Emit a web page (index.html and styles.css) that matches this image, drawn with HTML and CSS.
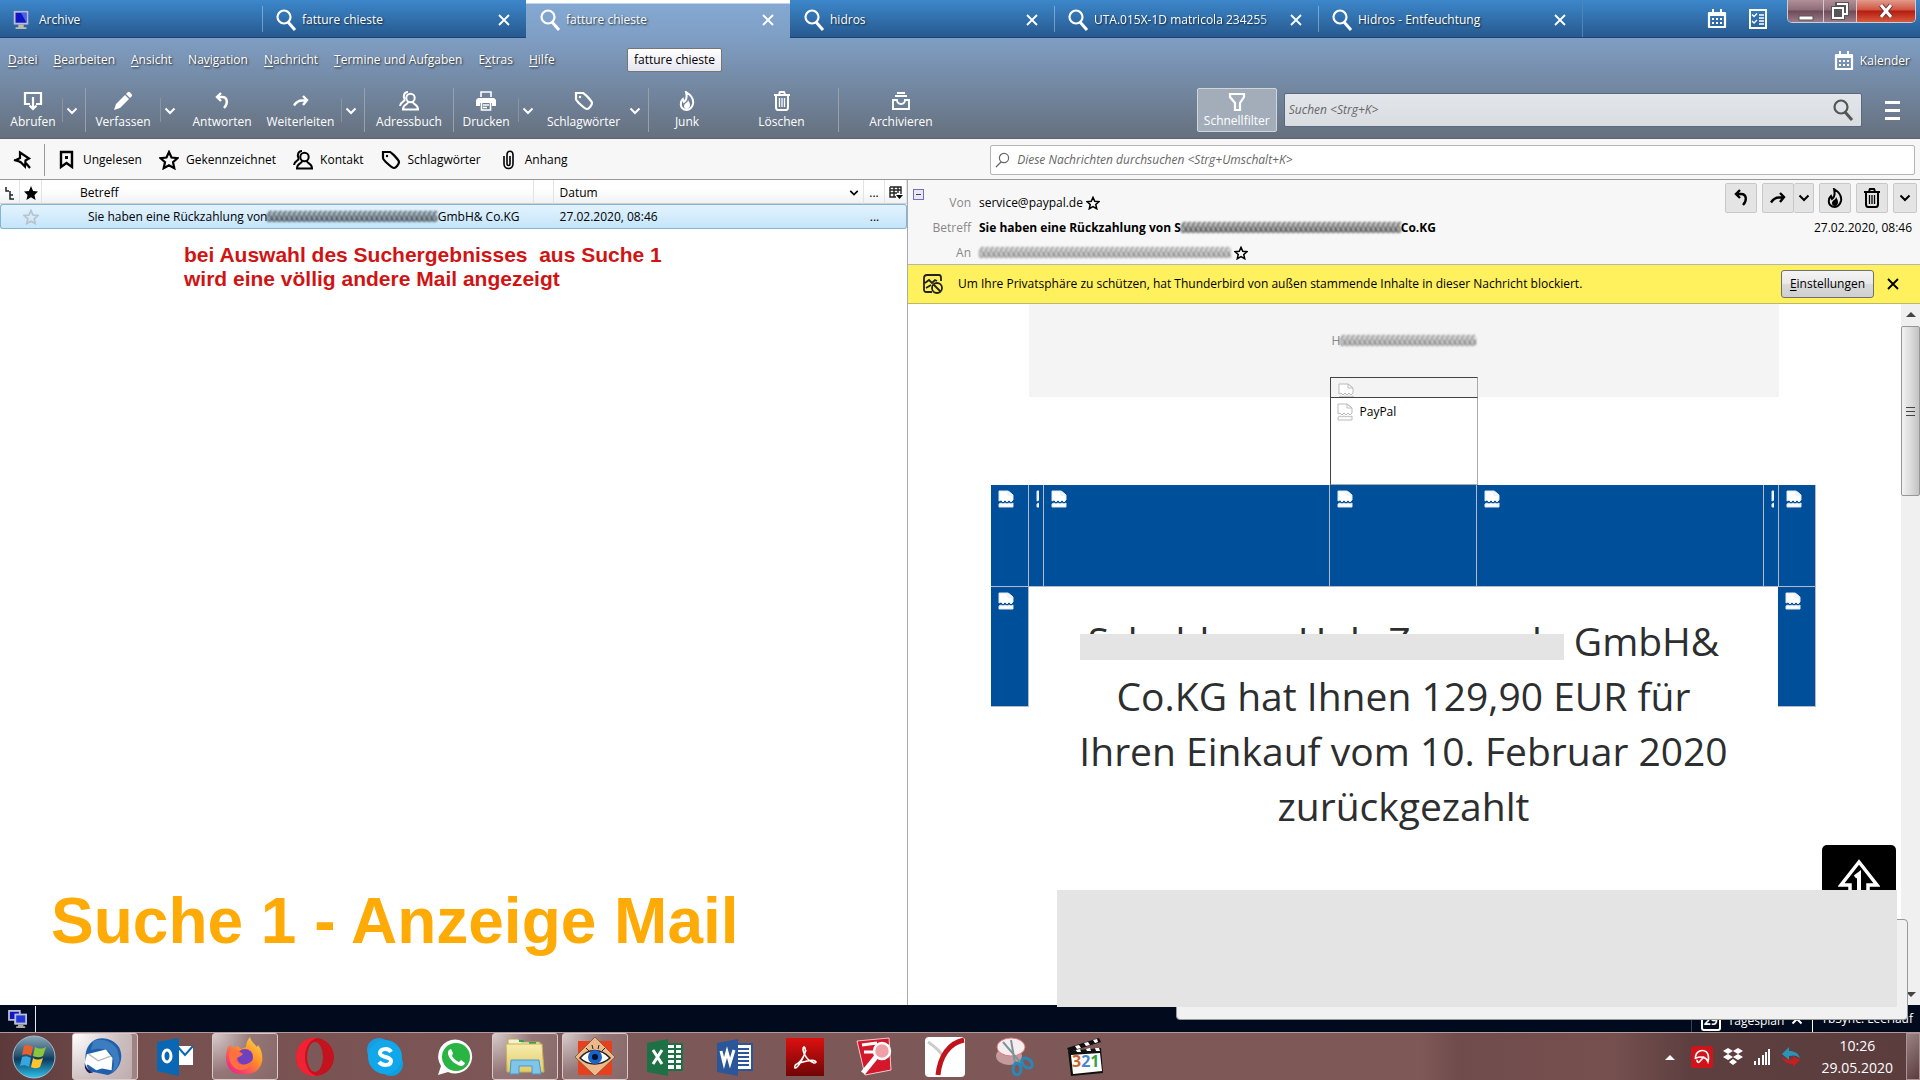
FILE: index.html
```html
<!DOCTYPE html>
<html lang="de">
	<head>
		<meta charset="utf-8">
		<title>fatture chieste</title>
		<link rel="stylesheet" href="styles.css">
	</head>
	<body>
		<!-- shared icons -->
		<svg class="defs" width="0" height="0">
			<defs>
				<pattern id="streaks" width="5" height="20" patternUnits="userSpaceOnUse">
					<path d="M5 4C2 3 1 6 3 8s2 6-2 5M0 6l1 7" fill="none" stroke="currentColor" stroke-width="1.4"/>
				</pattern>
				<linearGradient id="orb" x1="0" y1="0" x2="0" y2="1"><stop offset="0" stop-color="#8aa7b8"/><stop offset="0.45" stop-color="#2a5572"/><stop offset="0.55" stop-color="#0d3a5c"/><stop offset="1" stop-color="#2fc4ee"/></linearGradient>
				<linearGradient id="fox" x1="1" y1="0" x2="0.2" y2="1"><stop offset="0" stop-color="#ffe14a"/><stop offset="0.5" stop-color="#ff8a2a"/><stop offset="1" stop-color="#f0208a"/></linearGradient>
				<linearGradient id="acro" x1="0" y1="0" x2="0" y2="1"><stop offset="0" stop-color="#dd1010"/><stop offset="1" stop-color="#700505"/></linearGradient>
				<linearGradient id="folder" x1="0" y1="0" x2="0" y2="1"><stop offset="0" stop-color="#f7ecae"/><stop offset="1" stop-color="#e2cb68"/></linearGradient>
			</defs>
			<symbol id="i-search" viewBox="0 0 24 24"><g fill="none" stroke="currentColor"><circle cx="10" cy="9" r="6.5" stroke-width="2.2"/><path d="M14 14l7 8" stroke-width="3"/></g></symbol>
			<symbol id="i-find" viewBox="0 0 16 16"><g fill="none" stroke="currentColor" stroke-width="1.2"><circle cx="9" cy="6" r="4.6"/><path d="M6 10l-5 5"/></g></symbol>
			<symbol id="i-close" viewBox="0 0 14 14"><path d="M2 2l10 10M12 2L2 12" fill="none" stroke="currentColor" stroke-width="1.8"/></symbol>
			<symbol id="i-pc" viewBox="0 0 20 22"><path d="M2 1h16v15H2z" fill="#b9bdd6"/><path d="M4 3h12v11H4z" fill="#1215c4"/><path d="M10 3h6v11z" fill="#4a63ee"/><path d="M7 16h6v3h3v2H4v-2h3z" fill="#bdbba9"/></symbol>
			<symbol id="i-down" viewBox="0 0 12 8"><path d="M1.500 1.500L6 6l4.500-4.500" fill="none" stroke="currentColor" stroke-width="2"/></symbol>
			<symbol id="i-get" viewBox="0 0 20 20"><path d="M7 13H2V2h16v11h-5M10 6v12M6.500 14.500L10 18l3.500-3.500" fill="none" stroke="currentColor" stroke-width="2.2"/></symbol>
			<symbol id="i-pen" viewBox="0 0 20 20"><path d="M1 19l2-6L12 4l4 4-9 9zM13 3l2-2c1-1 5 3 4 4l-2 2z" fill="currentColor"/></symbol>
			<symbol id="i-reply" viewBox="0 0 20 20"><path d="M9 2L5 6l4 4M5 6h5c6 0 6 7 2 11" fill="none" stroke="currentColor" stroke-width="2.400"/></symbol>
			<symbol id="i-forward" viewBox="0 0 20 20"><path d="M12 5l4 4-4 5M16 9.500h-5c-4 0-6 2-8 5" fill="none" stroke="currentColor" stroke-width="2.400"/></symbol>
			<symbol id="i-contact" viewBox="0 0 20 20"><g fill="none" stroke="currentColor" stroke-width="2"><circle cx="11.500" cy="7" r="4.200"/><path d="M9 11c0 3-5 2-5 7.500h15c0-5.500-5-4.500-5-7.500M9 1C5 1 4 5 5.500 8c1 3-4 2-4.500 7"/></g></symbol>
			<symbol id="i-print" viewBox="0 0 20 20"><path d="M5 6V1h10v5" fill="none" stroke="currentColor" stroke-width="1.600"/><path d="M2 7h16l2 2v6h-4v-3H4v3H0V9z" fill="currentColor"/><path d="M5.500 11h9v8h-9zM7 14h6M7 16.500h4" fill="none" stroke="currentColor" stroke-width="1.600"/></symbol>
			<symbol id="i-tag" viewBox="0 0 20 20"><path d="M2 2h7c2 1 9 8 9 10s-3 6-5 6S2 10 2 8z" fill="none" stroke="currentColor" stroke-width="2.200"/><circle cx="6" cy="6" r="1.200" fill="currentColor"/></symbol>
			<symbol id="i-junk" viewBox="0 0 20 20"><path d="M9 1c5 3 8 7 7 12-1 4-4 6-6 6-4 0-7-3-6-7 0-2 1-3 2-4l1 3c3-2 3-6 2-10z" fill="none" stroke="currentColor" stroke-width="2"/><path d="M11 9c0 3-4 3-4 6 0 2 1 3 3 3s3-2 3-4-1-3-2-5z" fill="currentColor"/></symbol>
			<symbol id="i-trash" viewBox="0 0 20 20"><path d="M2 4h16M7 3l1-2h4l1 2M4 4v12c0 2 1 3 2 3h8c1 0 2-1 2-3V4" fill="none" stroke="currentColor" stroke-width="2"/><path d="M7.500 7v9M10 7v9M12.500 7v9" fill="none" stroke="currentColor" stroke-width="1.300"/></symbol>
			<symbol id="i-archive" viewBox="0 0 20 20"><path d="M6 2h8M4 5h12M2 9v9h16V9h-4c0 2-1 4-4 4s-4-2-4-4z" fill="none" stroke="currentColor" stroke-width="1.900"/></symbol>
			<symbol id="i-filter" viewBox="0 0 20 20"><path d="M3 2h14v3l-4 6v7H8v-7L3 5z" fill="none" stroke="currentColor" stroke-width="2.2"/></symbol>
			<symbol id="i-calendar" viewBox="0 0 20 20"><path d="M2 4h16v14H2z" fill="none" stroke="currentColor" stroke-width="2.200" stroke-linejoin="round"/><path d="M2 3h16v4H2zM5 0h2v3H5zM13 0h2v3h-2zM5 9h2v2H5zM9 9h2v2H9zM13 9h2v2h-2zM5 13h2v2H5zM9 13h2v2H9zM13 13h2v2h-2z" fill="currentColor"/></symbol>
			<symbol id="i-tasks" viewBox="0 0 20 20"><path d="M2 1h16v18H2z" fill="none" stroke="currentColor" stroke-width="2"/><path d="M4 5.500l2 2 3-3M4 12l2 2 3-3M11 6h5M11 9h5M11 12h5M11 15h5" fill="none" stroke="currentColor" stroke-width="1.300"/></symbol>
			<symbol id="i-pin" viewBox="0 0 20 20"><path d="M8 2.500l9 6-3.500 2-.5 6-4-4-5-2.500 4-2zM9 12L2 10M13 12l5 6" fill="none" stroke="currentColor" stroke-width="2.200"/></symbol>
			<symbol id="i-unread" viewBox="0 0 20 20"><path d="M5 2h11v15l-5.500-4L5 17z" fill="none" stroke="currentColor" stroke-width="2.400"/><path d="M9 6h3v3H9z" fill="currentColor"/></symbol>
			<symbol id="i-star" viewBox="0 0 20 20"><path d="M10 2l2.500 5.500 6 .7-4.500 4 1.300 6L10 15.200 4.700 18.200 6 12.200l-4.500-4 6-.7z" fill="none" stroke="currentColor" stroke-width="2.2"/></symbol>
			<symbol id="i-clip" viewBox="0 0 20 20"><path d="M6 6v8c0 6 9 6 9 0V5c0-5-6-5-6 0v9c0 2 3 2 3 0V6" fill="none" stroke="currentColor" stroke-width="1.600"/></symbol>
			<symbol id="i-broken" viewBox="0 0 16 18"><path d="M1 1h9l5 4v5l-2 2-2-2-2 2-2-2-2 2-2-2-2 1z" fill="var(--page)" stroke="var(--line)"/><path d="M10 1v4h5zM1 14l2-1 2 1 2-1 2 1 2-1 2 1 2-1v4H1z" fill="var(--page)" stroke="var(--line)"/></symbol>
		</svg>

		<div class="window">
			<nav class="tabs">
				<a href="#" class="tab first"><svg class="i20"><use href="#i-pc"/></svg><span>Archive</span></a>
				<a href="#" class="tab"><svg class="i24"><use href="#i-search"/></svg><span>fatture chieste</span><svg class="i14"><use href="#i-close"/></svg></a>
				<a href="#" class="tab active"><svg class="i24"><use href="#i-search"/></svg><span>fatture chieste</span><svg class="i14"><use href="#i-close"/></svg></a>
				<a href="#" class="tab plain"><svg class="i24"><use href="#i-search"/></svg><span>hidros</span><svg class="i14"><use href="#i-close"/></svg></a>
				<a href="#" class="tab"><svg class="i24"><use href="#i-search"/></svg><span class="fade">UTA.015X-1D matricola 234255</span><svg class="i14"><use href="#i-close"/></svg></a>
				<a href="#" class="tab"><svg class="i24"><use href="#i-search"/></svg><span>Hidros - Entfeuchtung</span><svg class="i14"><use href="#i-close"/></svg></a>
				<div class="tab-tools">
					<button aria-label="Kalender"><svg class="i20"><use href="#i-calendar"/></svg></button>
					<button aria-label="Aufgaben"><svg class="i20"><use href="#i-tasks"/></svg></button>
				</div>
				<div class="controls">
					<button class="min" aria-label="Minimieren"><svg width="16" height="14"><path d="M1 8h14v4H1z" fill="#fff" stroke="#555"/></svg></button>
					<button class="restore" aria-label="Verkleinern"><svg width="18" height="18"><path d="M6 2h10v10H6zM2 6h10v10H2z" fill="none" stroke="#555" stroke-width="4"/><path d="M6 2h10v10h-4M2 6h10v10H2z" fill="none" stroke="#fff" stroke-width="2"/></svg></button>
					<button class="shut" aria-label="Schließen"><svg width="16" height="16"><path d="M3 2l10 12M13 2L3 14" stroke="#6b3030" stroke-width="5"/><path d="M3 2l10 12M13 2L3 14" stroke="#fff" stroke-width="3"/></svg></button>
				</div>
			</nav>

			<header class="head">
				<div class="menu">
					<a href="#"><u>D</u>atei</a>
					<a href="#"><u>B</u>earbeiten</a>
					<a href="#"><u>A</u>nsicht</a>
					<a href="#">Na<u>v</u>igation</a>
					<a href="#"><u>N</u>achricht</a>
					<a href="#"><u>T</u>ermine und Aufgaben</a>
					<a href="#">E<u>x</u>tras</a>
					<a href="#"><u>H</u>ilfe</a>
					<button class="cal"><svg class="i20"><use href="#i-calendar"/></svg>Kalender</button>
					<div class="tip">fatture chieste</div>
				</div>
				<div class="toolbar">
					<div class="tools">
						<button><svg class="i20"><use href="#i-get"/></svg>Abrufen</button>
						<button class="more end" aria-label="mehr"><svg class="i12"><use href="#i-down"/></svg></button>
						<button><svg class="i20"><use href="#i-pen"/></svg>Verfassen</button>
						<button class="more" aria-label="mehr"><svg class="i12"><use href="#i-down"/></svg></button>
						<button><svg class="i20"><use href="#i-reply"/></svg>Antworten</button>
						<button><svg class="i20"><use href="#i-forward"/></svg>Weiterleiten</button>
						<button class="more end" aria-label="mehr"><svg class="i12"><use href="#i-down"/></svg></button>
						<button class="end"><svg class="i20"><use href="#i-contact"/></svg>Adressbuch</button>
						<button><svg class="i20"><use href="#i-print"/></svg>Drucken</button>
						<button class="more" aria-label="mehr"><svg class="i12"><use href="#i-down"/></svg></button>
						<button><svg class="i20"><use href="#i-tag"/></svg>Schlagwörter</button>
						<button class="more bare end" aria-label="mehr"><svg class="i12"><use href="#i-down"/></svg></button>
						<button><svg class="i20"><use href="#i-junk"/></svg>Junk</button>
						<button class="end"><svg class="i20"><use href="#i-trash"/></svg>Löschen</button>
						<button><svg class="i20"><use href="#i-archive"/></svg>Archivieren</button>
					</div>
					<button class="quick"><svg class="i20"><use href="#i-filter"/></svg>Schnellfilter</button>
					<label class="search">
						<input type="text" placeholder="Suchen &lt;Strg+K&gt;" aria-label="Suchen">
						<svg class="i24"><use href="#i-search"/></svg>
					</label>
					<button class="burger" aria-label="Menü"><i></i><i></i><i></i></button>
				</div>
			</header>

			<div class="filterbar">
				<button class="pin" aria-label="Anheften"><svg class="i20"><use href="#i-pin"/></svg></button>
				<button><svg class="i20"><use href="#i-unread"/></svg>Ungelesen</button>
				<button><svg class="i20"><use href="#i-star"/></svg>Gekennzeichnet</button>
				<button><svg class="i20"><use href="#i-contact"/></svg>Kontakt</button>
				<button><svg class="i20"><use href="#i-tag"/></svg>Schlagwörter</button>
				<button><svg class="i20"><use href="#i-clip"/></svg>Anhang</button>
				<label class="find">
					<svg class="i16"><use href="#i-find"/></svg>
					<input type="text" placeholder="Diese Nachrichten durchsuchen &lt;Strg+Umschalt+K&gt;" aria-label="Diese Nachrichten durchsuchen">
				</label>
			</div>

			<main class="panes">
				<section class="list">
					<table>
						<colgroup><col class="c-thread"><col class="c-star"><col class="c-subject"><col class="c-gap"><col class="c-date"><col class="c-dots"><col class="c-pick"></colgroup>
						<thead>
							<tr>
								<th><svg width="12" height="14"><path d="M2 1v4h3M6 5v8h4M6 9h3" fill="none" stroke="#222" stroke-width="1.500"/></svg></th>
								<th><svg width="14" height="14" viewBox="0 0 20 20"><path d="M10 0l3 7 7 .7-5 5 1.500 7.300L10 16l-6.500 4L5 12.700l-5-5L7 7z"/></svg></th>
								<th class="subject">Betreff</th>
								<th></th>
								<th class="date"><div>Datum<svg class="i10"><use href="#i-down"/></svg></div></th>
								<th>...</th>
								<th><svg width="14" height="14"><path d="M1 1h11v7M1 1v10h6M1 4h11M5 1v10M9 1v6M1 7h7" fill="none" stroke="#222" stroke-width="1.400"/><path d="M7 9h7l-3.500 4z"/></svg></th>
							</tr>
						</thead>
						<tbody>
							<tr>
								<td></td>
								<td class="faint"><svg class="i16"><use href="#i-star"/></svg></td>
								<td class="subject"><div>Sie haben eine Rückzahlung von<svg class="smudge grow"><rect width="100%" height="18" fill="url(#streaks)"/></svg>GmbH&amp; Co.KG</div></td>
								<td></td>
								<td class="date">27.02.2020, 08:46</td>
								<td>...</td>
								<td></td>
							</tr>
						</tbody>
					</table>
					<p class="note">bei Auswahl des Suchergebnisses&nbsp; aus Suche 1<br>wird eine völlig andere Mail angezeigt</p>
					<h1>Suche 1 - Anzeige Mail</h1>
				</section>

				<section class="message">
					<div class="mailhead">
						<button class="fold" aria-label="Kopfzeilen einklappen"></button>
						<dl>
							<dt>Von</dt><dd>service@paypal.de<svg class="i14"><use href="#i-star"/></svg></dd>
							<dt>Betreff</dt><dd class="bold">Sie haben eine Rückzahlung von S<svg class="smudge dark"><rect width="100%" height="18" fill="url(#streaks)"/></svg>Co.KG</dd>
							<dt>An</dt><dd class="to"><svg class="smudge wide"><rect width="100%" height="18" fill="url(#streaks)"/></svg><svg class="i14"><use href="#i-star"/></svg></dd>
						</dl>
						<div class="side">
							<div class="actions">
								<button class="w32" aria-label="Antworten"><svg class="i20"><use href="#i-reply"/></svg></button>
								<div class="pair">
									<button class="w32" aria-label="Weiterleiten"><svg class="i20"><use href="#i-forward"/></svg></button>
									<button class="w20" aria-label="mehr"><svg class="i12"><use href="#i-down"/></svg></button>
								</div>
								<button class="w32" aria-label="Junk"><svg class="i20"><use href="#i-junk"/></svg></button>
								<button class="w32" aria-label="Löschen"><svg class="i20"><use href="#i-trash"/></svg></button>
								<button class="w24" aria-label="mehr"><svg class="i12"><use href="#i-down"/></svg></button>
							</div>
							<time>27.02.2020, 08:46</time>
						</div>
					</div>

					<div class="blocked">
						<svg width="20" height="20"><path d="M9 18H3c-1 0-2-1-2-2V4c0-2 1-3 3-3h12c1 0 2 1 2 3v3M2 9l4-3 3 3 3-3 2 1M3 14l5-3" fill="none" stroke="#222" stroke-width="1.800"/><circle cx="14" cy="14" r="5" fill="none" stroke="#222" stroke-width="1.800"/><path d="M10.500 10.500l7 7" stroke="#222" stroke-width="1.800"/></svg>
						<p>Um Ihre Privatsphäre zu schützen, hat Thunderbird von außen stammende Inhalte in dieser Nachricht blockiert.</p>
						<button class="settings"><span><u>E</u>instellungen</span></button>
						<button class="x" aria-label="Schließen"><svg class="i14"><use href="#i-close"/></svg></button>
					</div>

					<div class="view">
						<article class="mail">
							<div class="preheader">
								<div class="hello">H<svg class="smudge pale"><rect width="100%" height="18" fill="url(#streaks)"/></svg></div>
								<div class="spacer"><svg class="broken"><use href="#i-broken"/></svg></div>
							</div>
							<div class="logo"><svg class="broken"><use href="#i-broken"/></svg>PayPal</div>
							<div class="band">
								<div><svg class="broken"><use href="#i-broken"/></svg></div>
								<div class="slim"><svg class="broken"><use href="#i-broken"/></svg></div>
								<div><svg class="broken"><use href="#i-broken"/></svg></div>
								<div><svg class="broken"><use href="#i-broken"/></svg></div>
								<div><svg class="broken"><use href="#i-broken"/></svg></div>
								<div class="slim"><svg class="broken"><use href="#i-broken"/></svg></div>
								<div><svg class="broken"><use href="#i-broken"/></svg></div>
							</div>
							<div class="content">
								<div class="edge"><svg class="broken"><use href="#i-broken"/></svg></div>
								<h2><span class="hidden">Schuhhaus Holz Zannerde</span> GmbH&amp;<br>Co.KG hat Ihnen 129,90 EUR für<br>Ihren Einkauf vom 10. Februar 2020<br>zurückgezahlt</h2>
								<div class="edge"><svg class="broken"><use href="#i-broken"/></svg></div>
							</div>
						</article>
						<div class="scroll">
							<span class="arrow up"></span>
							<div class="thumb"><i></i><i></i><i></i></div>
							<span class="arrow down"></span>
						</div>
					</div>
				</section>
			</main>

			<footer class="status">
				<svg width="20" height="18" viewBox="0 0 22 20"><path d="M0 0h14v12H0zM7 5h14v11H7z" fill="#b9bdd6"/><path d="M2 2h10v8H2z" fill="#1215c4"/><path d="M7 4h14v12H7z" fill="#b9bdd6"/><path d="M9 6h10v8H9z" fill="#2338d8"/><path d="M11 16h6v2h2v2h-10v-2h2z" fill="#a9a99c"/></svg>
				<span class="bar"></span>
				<button class="plan"><b>29</b>Tagesplan<svg class="i12 flip"><use href="#i-down"/></svg></button>
				<span class="sync">TbSync: Leerlauf</span>
			</footer>

			<!-- things lying over the mail -->
			<div class="upload"><svg width="42" height="42"><path d="M21 3L3 26h9v14h18V26h9z" fill="none" stroke="#fff" stroke-width="3.500"/><path d="M17 18l4-3v24" fill="none" stroke="#fff" stroke-width="4"/></svg></div>
			<div class="popup"></div>
			<div class="cover"></div>
		</div>

		<div class="taskbar">
			<button class="start" aria-label="Start"><svg width="44" height="44" viewBox="0 0 44 44"><circle cx="22" cy="22" r="21" fill="url(#orb)" stroke="#a5bccb"/><path d="M12 11c4-2 6-1 9 1l-2 9c-3-2-6-2-9-1z" fill="#e8602c"/><path d="M23 12c4 2 7 2 11 0l-3 9c-4 2-7 1-10 0z" fill="#8cc63e"/><path d="M10 22c3-1 6-1 9 1l-2 9c-3-2-6-2-9-1z" fill="#38a6e0"/><path d="M21 23c3 2 6 2 10 0l-3 9c-4 2-7 1-9 0z" fill="#fdc52e"/></svg></button>
			<button class="open bright" aria-label="Thunderbird"><svg width="42" height="40" viewBox="0 0 44 42"><path d="M12 4C18-1 33 1 39 11c6 12-1 26-12 29L8 36C2 28 1 11 12 4z" fill="#1f5ea8"/><path d="M12 4c8-3 20 0 25 9l2 9c1 6-3 12-8 16 4-7 3-16-2-22-4-4-13-5-20-2z" fill="#3c7cc0"/><path d="M5 18l20-5 7 9-1 13-10-2-6 2-9-6-4 3z" fill="#fff"/><path d="M7 18l10 7 13-5" fill="none" stroke="#b6b6be" stroke-width="1.500"/><path d="M3 27c1 6 5 9 9 10l-4 1c-4-2-6-6-5-11z" fill="#241a50"/></svg></button>
			<button aria-label="Outlook"><svg width="40" height="40" viewBox="0 0 40 40"><path d="M22 9h16v19H22z" fill="#fff"/><path d="M22 9l8 9 8-9" fill="none" stroke="#0a67b3" stroke-width="2"/><path d="M2 5l22-4v38L2 34z" fill="#0a67b3"/><ellipse cx="12" cy="19" rx="4" ry="6" fill="none" stroke="#fff" stroke-width="3"/></svg></button>
			<button class="open" aria-label="Firefox"><svg width="40" height="40" viewBox="0 0 40 40"><path d="M3 10l3-2 2 3 5-2 3 3c3-1 4-2 5-2 0-4 2-8 4-10 1 5 5 7 7 10l1-2c4 5 5 12 4 17-3 11-12 13-19 12C8 38 1 31 1 21c0-5 1-8 2-11z" fill="url(#fox)"/><circle cx="20" cy="20" r="8" fill="#7040c0"/><path d="M5 14c5-3 9 0 13 3-3 4-7 2-7 7 4 6 11 4 16 0-2 10-15 12-20 4-3-5-4-9-2-14z" fill="#ff7040"/></svg></button>
			<button aria-label="Opera"><svg width="40" height="40" viewBox="0 0 40 40"><ellipse cx="20" cy="20" rx="19" ry="19" fill="#c4121f"/><path d="M24 1C8-1 1 10 1 20s7 21 23 19c-8 0-14-8-14-19S16 1 24 1z" fill="#f02335"/><ellipse cx="20" cy="20" rx="8" ry="15" fill="#7d5858"/></svg></button>
			<button aria-label="Skype"><svg width="38" height="40" viewBox="0 0 38 40"><circle cx="13" cy="13" r="12" fill="#1d9be0"/><circle cx="25" cy="27" r="12" fill="#0f9ee0"/><circle cx="19" cy="20" r="17" fill="#10a8ea"/><path d="M25 15c-2-4-11-4-11 1 0 5 11 3 11 8 0 5-9 5-12 1" fill="none" stroke="#fff" stroke-width="4"/></svg></button>
			<button aria-label="WhatsApp"><svg width="38" height="38" viewBox="0 0 38 38"><path d="M2 37l3-9A17 17 0 1 1 12 34z" fill="#fff"/><circle cx="20" cy="19" r="14" fill="#29b443"/><path d="M13 12l2-1 2 4-1 3c2 3 4 5 7 6l2-2 4 3c-1 3-4 4-7 2-5-2-9-7-10-11 0-2 0-3 1-4z" fill="#fff"/></svg></button>
			<button class="open" aria-label="Explorer"><svg width="40" height="40" viewBox="0 0 40 40"><path d="M3 2h10l3 3h19v6H3z" fill="#f6f0cc" stroke="#b9a45a"/><path d="M14 3h5v2h-5zM24 5h7v2h-7z" fill="#35a050"/><path d="M1 7h36l2 28H2z" fill="url(#folder)" stroke="#c7b055"/><path d="M5 37l1-14h28l2 14h-9v-8H14v8z" fill="#7fc4ea" stroke="#4b9ac8"/></svg></button>
			<button class="open" aria-label="FastStone"><svg width="40" height="40" viewBox="0 0 40 40"><path d="M3 4h34v34H3z" fill="#e8401c"/><path d="M20 0l20 20-20 19L0 20z" fill="#eeb98a" stroke="#8c5a36"/><path d="M5 21c8-10 21-10 30 0-9 8-22 8-30 0z" fill="#fff" stroke="#222" stroke-width="1.500"/><circle cx="20" cy="20" r="7" fill="#1c62c8"/><circle cx="20" cy="20" r="3" fill="#061028"/><path d="M11 11l3 3M17 8l1 4M24 8l-1 4M30 11l-3 3" stroke="#222"/></svg></button>
			<button aria-label="Excel"><svg width="38" height="38" viewBox="0 0 38 38"><path d="M18 6h18v26H18z" fill="#fff" stroke="#1e7145" stroke-width="2"/><path d="M22 11h14M22 16h14M22 21h14M22 26h14M29 6v26" stroke="#1e7145" stroke-width="2"/><path d="M1 5l21-4v37L1 34z" fill="#1e7145"/><path d="M7 12l9 14M16 12L7 26" stroke="#fff" stroke-width="3"/></svg></button>
			<button aria-label="Word"><svg width="38" height="38" viewBox="0 0 38 38"><path d="M18 6h18v26H18z" fill="#fff" stroke="#2b579a" stroke-width="2"/><path d="M20 11h13M20 15h13M20 19h13M20 23h13M20 27h13" stroke="#2b579a" stroke-width="2"/><path d="M1 5l21-4v37L1 34z" fill="#2b579a"/><path d="M5 13l3 12 3-11 3 11 4-13" fill="none" stroke="#fff" stroke-width="3"/></svg></button>
			<button aria-label="Acrobat"><svg width="38" height="38" viewBox="0 0 38 38"><path d="M0 0h38v38H0z" fill="url(#acro)"/><path d="M9 27c7-3 13-15 9-18-3 1 1 13 10 16 4 0 2-4-7-2-5 1-14 3-12 7 3 0 8-9 11-18" fill="none" stroke="#fff" stroke-width="1.600"/></svg></button>
			<button aria-label="PDF-Suche"><svg width="38" height="40" viewBox="0 0 38 40"><path d="M1 4l32-3 2 32-26 5z" fill="#d2182a" stroke="#f6c8cc"/><path d="M6 8l15-2M8 15h10" stroke="#fff" stroke-width="3"/><circle cx="26" cy="14" r="8" fill="#f0a0a4" stroke="#fff" stroke-width="2.500"/><path d="M20 20L7 36" stroke="#fff" stroke-width="5"/></svg></button>
			<button aria-label="Yandex"><svg width="40" height="40" viewBox="0 0 40 40"><rect width="40" height="40" rx="4" fill="#fff"/><path d="M3 5c9 6 13 10 16 16" fill="none" stroke="#ccc" stroke-width="3"/><path d="M39 3C24 6 15 19 13 38" fill="none" stroke="#c0141c" stroke-width="5"/></svg></button>
			<button aria-label="Snipping Tool"><svg width="40" height="40" viewBox="0 0 40 40"><ellipse cx="14" cy="19" rx="13" ry="9" fill="#c49a9c"/><ellipse cx="16" cy="10" rx="14" ry="9" fill="#f6eeee" stroke="#e07a80"/><path d="M8 5l18 21M16 3l4 23" stroke="#7f949a" stroke-width="2"/><ellipse cx="22" cy="32" rx="4" ry="6" fill="none" stroke="#2b87b8" stroke-width="3"/><ellipse cx="32" cy="26" rx="6" ry="4" fill="none" stroke="#2b87b8" stroke-width="3" transform="rotate(40 32 26)"/></svg></button>
			<button class="clap" aria-label="Media Player Classic"><svg width="38" height="40" viewBox="0 0 38 40"><path d="M1 11L33 1l2 4L3 15z" fill="#111"/><path d="M9 9l4-1 2 3-4 1zM18 6l4-1 2 3-4 1zM27 3l4-1 1 3-3 1z" fill="#fff"/><path d="M2 14l33-3 2 25-32 3z" fill="#111"/><path d="M10 13l4-1 1 3h-4zM20 12l4-1 1 3h-4zM29 11h4l1 3h-4zM5 18l29-2 2 18-29 3z" fill="#fff"/></svg><span><b class="c3">3</b><b class="c2">2</b><b class="c1">1</b></span></button>
			<div class="tray">
				<svg class="up" width="12" height="8"><path d="M1 7l5-5 5 5z" fill="#fff"/></svg>
				<svg width="22" height="22"><rect width="22" height="22" rx="2" fill="#d0141c"/><path d="M5 14C3 7 9 3 14 5c3 2 4 5 4 9-3-4-8-4-13 0zM13 10l-3 6c-1 2-3 1-3-1" fill="none" stroke="#fff" stroke-width="1.600" transform="rotate(15 11 11)"/></svg>
				<svg width="20" height="18"><path d="M5 0l5 3-5 3-5-3zM15 0l5 3-5 3-5-3zM5 6l5 3-5 3-5-3zM15 6l5 3-5 3-5-3zM10 11l4 3-4 3-4-3z" fill="#fff"/></svg>
				<svg width="18" height="16"><path d="M1 12h2v4H1zM5 9h2v7H5zM9 6h2v10H9zM12 3h2v13h-2zM15 0h2v16h-2z" fill="#fff"/></svg>
				<svg width="20" height="22"><path d="M1 8l7-7v4c6 0 9 2 11 7-4-3-7-3-11-2v4z" fill="#2a93b8"/><path d="M19 14l-7 7v-3c-6 0-9-2-11-7 4 3 7 3 11 2v-3z" fill="#c42020"/></svg>
				<time>10:26<br>29.05.2020</time>
			</div>
			<button class="desktop" aria-label="Desktop anzeigen"></button>
		</div>
	</body>
</html>
```

FILE: styles.css
```css
* {
	box-sizing: border-box;
}

body {
	margin: 0;
	height: 100vh;
	display: flex;
	flex-direction: column;
	overflow: hidden;
	font: 12px/18px "Open Sans", "Noto Sans", sans-serif;
	color: #000;
	background: #fff;
}

a {
	color: inherit;
	text-decoration: none;
}

button, input {
	font: inherit;
	color: inherit;
	border: 0;
	padding: 0;
	margin: 0;
	background: none;
}

button {
	display: flex;
	align-items: center;
	justify-content: center;
}

p, h1, h2, dl, dd {
	margin: 0;
}

svg {
	flex: none;
	display: block;
}

.defs { position: absolute; }
.i10 { width: 10px; height: 8px; }
.i12 { width: 12px; height: 10px; }
.i14 { width: 14px; height: 14px; }
.i16 { width: 16px; height: 16px; }
.i20 { width: 20px; height: 20px; }
.i24 { width: 24px; height: 24px; }
.flip { transform: rotate(180deg); }

.window {
	position: relative;
	flex: 1;
	min-height: 0;
	display: flex;
	flex-direction: column;
}

/* tabs */
.tabs {
	display: flex;
	height: 38px;
	flex: none;
	color: #fff;
	background: linear-gradient(#3c87ca, #27598f);
	border-bottom: 1px solid #1d4472;
	text-shadow: 1px 1px 2px #123;
}

.tab {
	width: 264px;
	display: flex;
	align-items: center;
	gap: 4px;
	padding: 2px 15px 0 12px;
	background: linear-gradient(#7aabd8, #6c98c6) left center / 1px 26px no-repeat;
}

.tab.first {
	width: 262px;
	gap: 8px;
	padding-left: 11px;
	background: none;
}

.tab.plain {
	background: none;
}

.tab span {
	flex: 1;
	white-space: nowrap;
	overflow: hidden;
}

.tab .fade {
	-webkit-mask-image: linear-gradient(90deg, #000 85%, transparent);
	mask-image: linear-gradient(90deg, #000 85%, transparent);
}

.tab.active {
	height: 38px;
	background: linear-gradient(#fff 3px, #84a9d2 4px, #7f9ec4);
}

.tab:last-of-type {
	width: 265px;
	border-right: 1px solid #4f83b9;
}

.tab-tools {
	margin-left: auto;
	display: flex;
	gap: 21px;
	padding-right: 19px;
}

.controls {
	display: flex;
	height: 23px;
	margin-right: 4px;
	border: 1px solid #d6c9d2;
	border-top: 0;
	border-radius: 0 0 5px 5px;
	overflow: hidden;
}

.controls button {
	background: linear-gradient(#b08f98, #8e6d78 45%, #6d4a58 50%, #9b7c88);
	border-right: 1px solid #d6c9d2;
}

.controls .min { width: 36px; align-items: flex-end; }
.controls .restore { width: 33px; }
.controls .shut { width: 58px; border: 0; background: linear-gradient(#e39b8b, #cf5440 45%, #b51c10 50%, #d65a3c); }

/* menu and toolbar */
.head {
	height: 101px;
	flex: none;
	color: #fff;
	background: linear-gradient(#7f9ec4, #66707e);
	border-bottom: 1px solid #5b6470;
	text-shadow: 1px 1px 2px #222;
}

.menu {
	position: relative;
	display: flex;
	align-items: center;
	gap: 16px;
	height: 44px;
	padding: 0 10px 0 8px;
}

.menu u, .settings u {
	text-underline-offset: 2px;
}

.cal {
	margin-left: auto;
	gap: 6px;
	padding-top: 2px;
	text-shadow: inherit;
}

.tip {
	position: absolute;
	left: 627px;
	top: 10px;
	padding: 2px 6px;
	color: #000;
	background: linear-gradient(#fff, #e5e6f0);
	border: 1px solid #767676;
	border-radius: 2px;
	text-shadow: none;
}

.toolbar {
	display: flex;
	align-items: center;
	padding: 6px 20px 6px 4px;
}

.tools {
	flex: 1;
	display: grid;
	grid-template-columns: 58px 24px 74px 24px 76px 81px 24px 89px 64px 24px 83px 24px 76px 114px 124px;
}

.tools button, .quick {
	flex-direction: column;
	justify-content: space-between;
	height: 44px;
	padding: 3px 0 1px;
	white-space: nowrap;
	text-shadow: none;
}

.tools .more {
	justify-content: center;
	padding-right: 4px;
	background: linear-gradient(#8a939e, #8a939e) left center / 1px 24px no-repeat;
}

.tools .bare {
	background: none;
}

.tools .end {
	border-right: 1px solid #97a1ad;
}

.quick {
	width: 80px;
	background: #a3adba;
	border: 1px solid #d0d5dc;
	border-radius: 2px;
}

.search {
	width: 30.5%;
	height: 34px;
	margin-left: 7px;
	display: flex;
	align-items: center;
	padding: 0 6px 0 4px;
	color: #555;
	background: linear-gradient(#e2e5ea, #dadde0);
	border: 1px solid #5a6a7e;
	border-radius: 2px;
	text-shadow: none;
}

.search input, .find input {
	flex: 1;
	min-width: 0;
	outline: 0;
}

input::placeholder {
	color: #666;
	font-style: italic;
	opacity: 1;
}

.burger {
	width: 15px;
	margin-left: 23px;
	flex-direction: column;
	gap: 5px;
}

.burger i {
	width: 15px;
	height: 3px;
	background: #fff;
}

/* quick filter */
.filterbar {
	height: 41px;
	flex: none;
	display: flex;
	align-items: center;
	gap: 17px;
	padding: 1px 5px 0 12px;
	background: #f7f7f7;
	border-bottom: 1px solid #999;
}

.filterbar button {
	gap: 7px;
}

.filterbar .pin {
	height: 32px;
	padding-right: 12px;
	margin-right: -6px;
	border-right: 1px solid #999;
}

.find {
	width: 48.6%;
	height: 30px;
	margin-left: auto;
	display: flex;
	align-items: center;
	gap: 6px;
	padding: 0 4px;
	color: #666;
	background: #fff;
	border: 1px solid #b5b5b5;
	border-radius: 2px;
}

/* panes */
.panes {
	flex: 1;
	min-height: 0;
	display: grid;
	grid-template-columns: 907fr 1013fr;
}

.list {
	position: relative;
	min-width: 0;
}

.list table {
	width: 100%;
	table-layout: fixed;
	border-collapse: separate;
	border-spacing: 0;
}

.c-thread, .c-gap { width: 20px; }
.c-star { width: 22px; }
.c-subject { width: 54.2%; }
.c-dots { width: 21px; }
.c-pick { width: 22px; }

th, td {
	padding: 0;
	text-align: center;
	font-weight: 400;
	white-space: nowrap;
}

th {
	height: 24px;
	padding-top: 2px;
	background: linear-gradient(#fff 40%, #f1f2f4);
	border-right: 1px solid #e2e3e5;
	border-bottom: 1px solid #d0d0d0;
}

th svg, td svg {
	margin: 0 auto;
}

td {
	height: 25px;
	padding-top: 1px;
	background: linear-gradient(#e3f3fd, #c5e5fb);
	border: solid #84b4cf;
	border-width: 1px 0;
}

td:first-child { border-left-width: 1px; border-radius: 3px 0 0 3px; }
td:last-child { border-right-width: 1px; border-radius: 0 3px 3px 0; }
.faint { color: #b9c3cb; }
th.subject { text-align: left; padding-left: 38px; }
td.subject { padding-left: 46px; padding-right: 14px; }
.date { text-align: left; padding-left: 6px; }

.date div {
	display: flex;
	align-items: center;
	justify-content: space-between;
	padding-right: 4px;
}

.date div svg {
	margin: 0;
}

.subject div {
	display: flex;
	align-items: center;
}

.smudge {
	width: 220px;
	height: 18px;
	color: #555;
	filter: blur(1px);
	opacity: 0.8;
}

.subject .grow {
	flex: 1;
	width: 0;
	margin: 0;
}

.smudge.wide { width: 252px; opacity: 0.5; }
.smudge.dark { color: #222; }
.smudge.pale { width: 136px; color: #777; opacity: 0.5; }

.note {
	margin: 14px 0 0 184px;
	font: bold 21px/24px "Liberation Sans", Arial, sans-serif;
	color: #d01414;
}

.list h1 {
	position: absolute;
	left: 51px;
	bottom: 48px;
	font: bold 64px/72px "Liberation Sans", Arial, sans-serif;
	color: #ffab07;
}

/* message */
.message {
	min-width: 0;
	display: flex;
	flex-direction: column;
	border-left: 1px solid #a5acb5;
}

.mailhead {
	height: 85px;
	flex: none;
	display: flex;
	padding: 3px 3px 0 5px;
	background: #f7f7f7;
	border-bottom: 1px solid #b5b5b5;
}

.fold {
	width: 11px;
	height: 11px;
	margin-top: 6px;
	border: 1px solid #7470b8;
	background: linear-gradient(#444, #444) center / 5px 1px no-repeat #e7e7f8;
}

.mailhead dl {
	flex: 1;
	display: grid;
	grid-template-columns: 47px 1fr;
	grid-auto-rows: 25px;
	column-gap: 8px;
	align-items: center;
	padding-top: 7px;
}

.mailhead dt {
	text-align: right;
	color: #888;
}

.mailhead dd {
	display: flex;
	align-items: center;
	gap: 3px;
}

.mailhead .bold {
	gap: 0;
	font-weight: 700;
}

.side {
	display: flex;
	flex-direction: column;
	align-items: flex-end;
	gap: 6px;
}

.side time {
	padding-right: 5px;
}

.actions {
	display: flex;
	gap: 5px;
}

.actions button {
	height: 30px;
	background: #e4e4e4;
	border: 1px solid #c8c8c8;
	border-radius: 2px;
}

.pair { display: flex; }
.pair .w20 { border-left: 0; }
.w32 { width: 32px; }
.w24 { width: 24px; }
.w20 { width: 20px; }

.blocked {
	height: 39px;
	flex: none;
	display: flex;
	align-items: center;
	padding: 0 20px 0 15px;
	background: #fff05e;
	border-bottom: 1px solid #bdb76a;
}

.blocked p {
	flex: 1;
	margin-left: 15px;
}

.settings {
	width: 93px;
	height: 28px;
	background: linear-gradient(#f4f4f4, #e9e9e9 48%, #dadada 52%, #cfcfcf);
	border: 1px solid #707070;
	border-radius: 3px;
}

.blocked .x {
	margin-left: 12px;
}

.view {
	flex: 1;
	min-height: 0;
	display: flex;
	overflow: hidden;
}

.mail {
	width: 827px;
	padding-right: 2px;
	margin: 0 auto;
	--page: #fff;
	--line: #bbb;
}

.broken {
	width: 16px;
	height: 18px;
}

.preheader {
	height: 93px;
	margin: 0 37px 0 38px;
	display: flex;
	flex-direction: column;
	align-items: center;
	justify-content: space-between;
	background: #f4f4f4;
}

.hello {
	display: flex;
	align-items: center;
	padding-top: 28px;
	color: #888;
}

.spacer {
	width: 148px;
	height: 20px;
	padding: 5px 7px 0;
	overflow: hidden;
	border: 1px solid #444;
	border-right-color: #aaa;
	border-bottom: 0;
}

.logo {
	width: 148px;
	height: 88px;
	margin: 0 auto;
	padding: 5px 6px;
	display: flex;
	align-items: flex-start;
	gap: 7px;
	border: 1px solid #444;
	border-right-color: #aaa;
	border-bottom-color: #aaa;
}

.band {
	height: 102px;
	display: grid;
	grid-template-columns: 38px 15px 286px 147px 287px 15px 37px;
}

.band div, .edge {
	padding: 5px 7px;
	overflow: hidden;
	background: #004f9b;
	border-right: 1px solid #b5bac4;
	border-bottom: 1px solid #b5bac4;
	--line: #dfe8f4;
}

.slim .broken {
	clip-path: inset(0 13px 0 0);
}

.content {
	display: flex;
}

.edge {
	width: 38px;
	height: 120px;
}

.content h2 {
	flex: 1;
	padding-top: 26px;
	text-align: center;
	white-space: nowrap;
	font: 39px/55px "Open Sans", "Noto Sans", sans-serif;
	color: #2c2e2f;
}

.hidden {
	position: relative;
}

.hidden::after {
	content: "";
	position: absolute;
	left: -8px;
	right: 0;
	top: 20px;
	height: 26px;
	background: #e4e4e4;
}

.scroll {
	width: 19px;
	display: flex;
	flex-direction: column;
	align-items: center;
	padding: 8px 0;
	background: #f0f0f0;
}

.arrow {
	border: solid transparent;
	border-width: 0 5px 5px;
	border-bottom-color: #444;
}

.arrow.down {
	margin-top: auto;
	transform: rotate(180deg);
}

.thumb {
	width: 19px;
	height: 170px;
	margin-top: 9px;
	display: flex;
	flex-direction: column;
	align-items: center;
	justify-content: center;
	gap: 3px;
	background: linear-gradient(90deg, #f3f3f3, #dcdcdc 50%, #c2c2c4);
	border: 1px solid #979797;
	border-radius: 2px;
}

.thumb i {
	width: 9px;
	height: 1px;
	background: #444;
}

/* status bar */
.status {
	height: 27px;
	flex: none;
	display: flex;
	align-items: center;
	padding: 0 7px 0 8px;
	color: #fff;
	background: #020b1e;
}

.status .bar {
	width: 1px;
	height: 26px;
	margin-left: 7px;
	background: #e8e8e8;
}

.plan {
	height: 27px;
	margin-left: auto;
	padding: 4px 9px 0 9px;
	gap: 7px;
	border-left: 1px solid #3a4256;
}

.plan b {
	width: 20px;
	border: 2px solid #fff;
	border-radius: 3px;
	line-height: 16px;
}

.sync {
	height: 27px;
	padding: 5px 0 0 8px;
	border-left: 1px solid #fff;
}

/* overlays */
.upload {
	position: absolute;
	right: 24px;
	bottom: 113px;
	width: 74px;
	height: 74px;
	display: flex;
	justify-content: center;
	padding-top: 14px;
	background: #000;
	border-radius: 5px;
}

.popup {
	position: absolute;
	right: 12px;
	bottom: 12px;
	width: 732px;
	height: 101px;
	background: #f1f1f1;
	border: 1px solid #999;
	border-radius: 4px;
}

.cover {
	position: absolute;
	right: 23px;
	bottom: 25px;
	width: 840px;
	height: 117px;
	background: #e4e4e4;
}

/* taskbar */
.taskbar {
	height: 48px;
	flex: none;
	display: flex;
	align-items: center;
	gap: 4px;
	background: linear-gradient(90deg, #5c3a3c, #775150 8%, #7d5858 30%, #7d5857 74%, #714c4c 76%, #75504f 84%, #5e3f40 88%, #5c3d3e);
	border-top: 1px solid #b39a9a;
}

.taskbar button {
	width: 66px;
	height: 47px;
}

.taskbar .start {
	width: 68px;
}

.taskbar .open {
	border: 1px solid #d9c9c9;
	border-radius: 3px;
	background: radial-gradient(circle at 0 0, #d8cccc, #947677 50%, #876869);
}

.taskbar .bright {
	background: radial-gradient(circle at 0 0, #fff, #cdbfc0 60%, #bba9aa);
	box-shadow: inset -5px 0 #a08484;
	padding-right: 5px;
}

.clap {
	position: relative;
}

.clap span {
	position: absolute;
	top: 19px;
	left: 20px;
	font: 16px/18px "Open Sans", sans-serif;
}

.c3 { color: #d0622a; }
.c2 { color: #4a86cc; }
.c1 { color: #3aa040; }

.tray {
	margin-left: auto;
	display: flex;
	align-items: center;
	gap: 10px;
	color: #fff;
}

.tray .up {
	margin-right: 5px;
}

.tray time {
	margin: 0 9px 0 11px;
	text-align: center;
	font-size: 14px;
	line-height: 22px;
}

.taskbar .desktop {
	width: 14px;
	border: 1px solid #a89292;
	background: linear-gradient(135deg, #9a8384, #5a3c3e);
}
```
